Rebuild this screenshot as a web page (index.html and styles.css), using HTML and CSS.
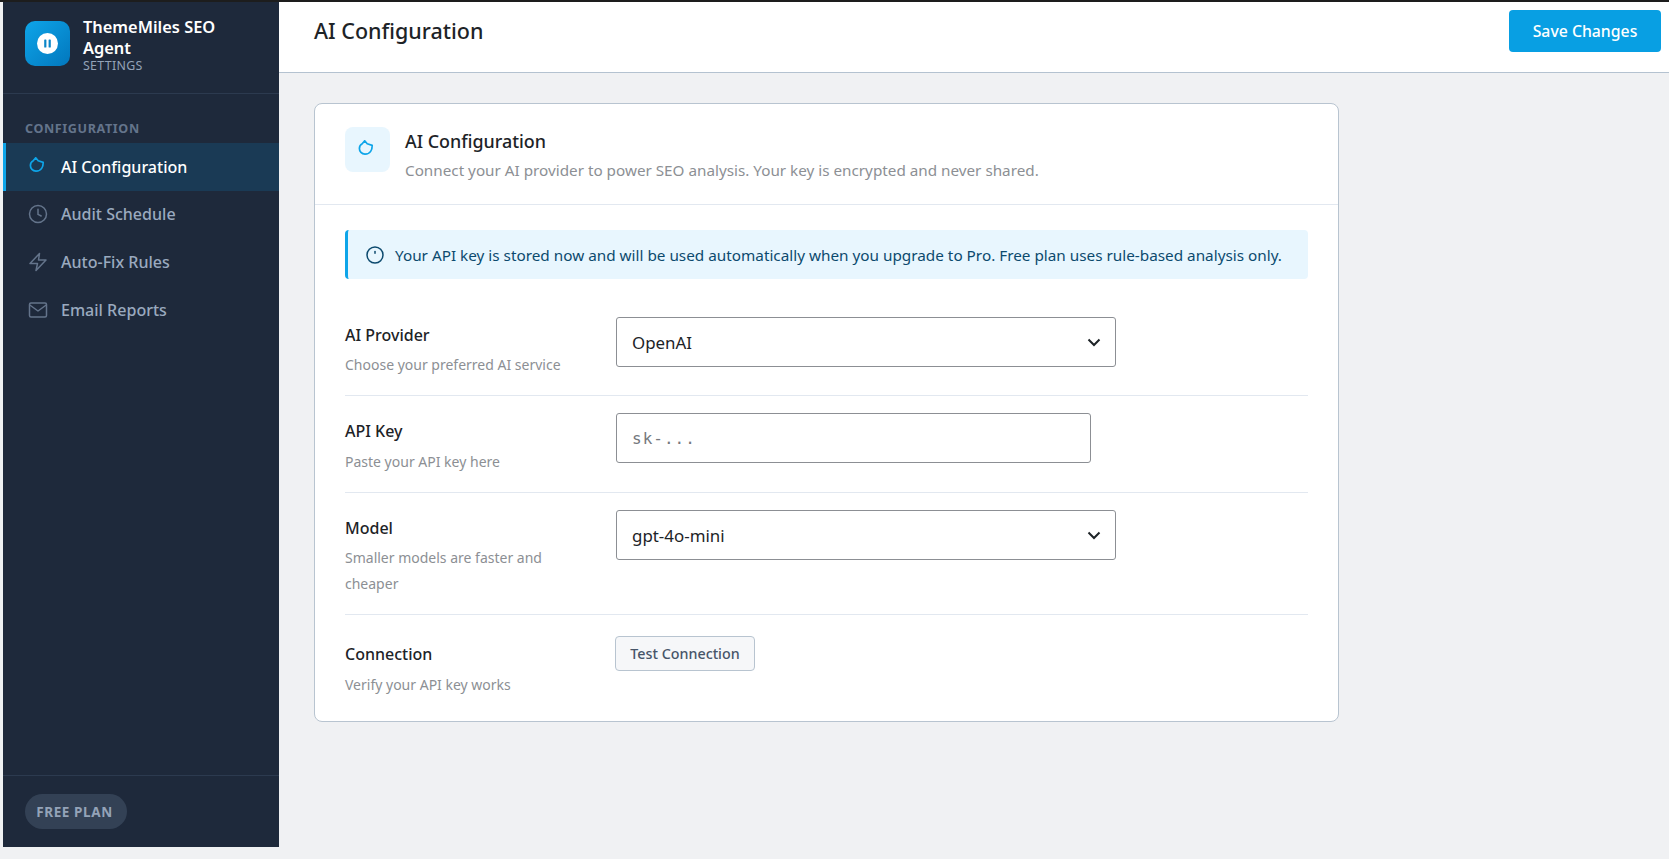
FILE: index.html
```html
<!DOCTYPE html>
<html lang="en">

<head>
  <meta charset="UTF-8" />
  <meta name="viewport" content="width=device-width, initial-scale=1.0" />
  <title>AI Configuration</title>
  <link rel="stylesheet" href="styles.css">
</head>

<body>
  <div class="app">
    <aside class="sidebar">
      <div class="brand">
        <div class="brand-logo">
          <svg width="21" height="21" viewBox="0 0 21 21">
            <circle cx="10.5" cy="10.5" r="10.5" fill="#fff" />
            <rect x="7.2" y="6.5" width="2.2" height="8" rx="0.6" fill="#0a86c8" />
            <rect x="11.6" y="6.5" width="2.2" height="8" rx="0.6" fill="#0a86c8" />
          </svg>
        </div>
        <div class="brand-text">
          <div class="brand-name">ThemeMiles SEO Agent</div>
          <div class="brand-sub">SETTINGS</div>
        </div>
      </div>

      <nav class="nav">
        <div class="nav-title">CONFIGURATION</div>
        <a class="nav-item active">
          <svg class="nav-icon" viewBox="0 0 20 20" fill="none" stroke="currentColor" stroke-width="1.7" stroke-linejoin="round">
            <path d="M7.7 0.8 10.2 3.8 15.2 5.4C15.2 9 13.8 14.2 8 14.2 4.6 14.2 2.4 11.4 2.4 8.4 2.4 6.4 3.4 4.8 5.2 3.8Z" />
          </svg>
          <span>AI Configuration</span>
        </a>
        <a class="nav-item">
          <svg class="nav-icon" viewBox="0 0 20 20" fill="none" stroke="currentColor" stroke-width="1.5" stroke-linecap="round" stroke-linejoin="round">
            <circle cx="10" cy="10" r="8.5" />
            <path d="M10 5.2V10.4L13.2 12" />
          </svg>
          <span>Audit Schedule</span>
        </a>
        <a class="nav-item">
          <svg class="nav-icon" viewBox="0 0 20 20" fill="none" stroke="currentColor" stroke-width="1.5" stroke-linejoin="round">
            <path d="M11.5 1.5 2 11.5H9.5L8 18.5 18 8H10.5Z" />
          </svg>
          <span>Auto-Fix Rules</span>
        </a>
        <a class="nav-item">
          <svg class="nav-icon" viewBox="0 0 20 20" fill="none" stroke="currentColor" stroke-width="1.5" stroke-linejoin="round">
            <rect x="1.5" y="3" width="17" height="14" rx="1.5" />
            <path d="M1.8 5 10 11 18.2 5" />
          </svg>
          <span>Email Reports</span>
        </a>
      </nav>

      <div class="sidebar-foot">
        <span class="plan">FREE PLAN</span>
      </div>
    </aside>

    <main class="main">
      <header class="topbar">
        <h1 class="page-title">AI Configuration</h1>
        <button class="btn-save">Save Changes</button>
      </header>

      <div class="content">
        <section class="card">
          <div class="card-head">
            <div class="card-icon">
              <svg class="card-glyph" width="20" height="20" viewBox="0 0 20 20" fill="none" stroke="#0ea5e9" stroke-width="1.7" stroke-linejoin="round">
                <path d="M7.7 0.8 10.2 3.8 15.2 5.4C15.2 9 13.8 14.2 8 14.2 4.6 14.2 2.4 11.4 2.4 8.4 2.4 6.4 3.4 4.8 5.2 3.8Z" />
              </svg>
            </div>
            <div class="card-text">
              <h2 class="card-title">AI Configuration</h2>
              <p class="card-desc">Connect your AI provider to power SEO analysis. Your key is encrypted and never shared.</p>
            </div>
          </div>

          <div class="card-body">
            <div class="notice">
              <svg width="18" height="18" viewBox="0 0 18 18" fill="none" stroke="#0c4a6e" stroke-width="1.5" stroke-linecap="round">
                <circle cx="9" cy="9" r="8" />
                <path d="M9 5.4V7.2" />
              </svg>
              <span>Your API key is stored now and will be used automatically when you upgrade to Pro. Free plan uses rule-based analysis only.</span>
            </div>

            <div class="row">
              <div class="row-label">
                <label class="label">AI Provider</label>
                <p class="hint">Choose your preferred AI service</p>
              </div>
              <div class="select">
                <span>OpenAI</span>
                <svg width="14" height="14" viewBox="0 0 14 14" fill="none" stroke="#1d2327" stroke-width="2"><path d="M1.5 4.5 7 10 12.5 4.5" /></svg>
              </div>
            </div>

            <div class="row">
              <div class="row-label">
                <label class="label">API Key</label>
                <p class="hint">Paste your API key here</p>
              </div>
              <input class="input" type="text" placeholder="sk-...">
            </div>

            <div class="row">
              <div class="row-label">
                <label class="label">Model</label>
                <p class="hint">Smaller models are faster and cheaper</p>
              </div>
              <div class="select">
                <span>gpt-4o-mini</span>
                <svg width="14" height="14" viewBox="0 0 14 14" fill="none" stroke="#1d2327" stroke-width="2"><path d="M1.5 4.5 7 10 12.5 4.5" /></svg>
              </div>
            </div>

            <div class="row row-last">
              <div class="row-label">
                <label class="label">Connection</label>
                <p class="hint">Verify your API key works</p>
              </div>
              <button class="btn-test">Test Connection</button>
            </div>
          </div>
        </section>
      </div>
    </main>
  </div>
</body>

</html>
```

FILE: styles.css
```css
:root {
  --primary-color: #0ea5e9;
  --sidebar-bg: #1e293b;
  --sidebar-line: #2c3a4f;
  --page-bg: #f0f1f3;
  --line: #e2e8f0;
  --muted: #8c8f94;
}

* {
  box-sizing: border-box;
}

html,
body {
  height: 100%;
}

body {
  margin: 0;
  font-family: 'Noto Sans', sans-serif;
  font-size: 14px;
  color: #1d2327;
  background-color: var(--page-bg);
  overflow: hidden;
}

.app {
  display: flex;
  height: 847px;
  padding-left: 3px;
  border-top: 2px solid #1d1d1d;
}

.sidebar {
  display: flex;
  flex-direction: column;
  width: 276px;
  flex-shrink: 0;
  background-color: var(--sidebar-bg);
}

.brand {
  display: flex;
  gap: 13px;
  height: 92px;
  padding: 19px 22px 0;
  border-bottom: 1px solid var(--sidebar-line);
}

.brand-logo {
  display: flex;
  align-items: center;
  justify-content: center;
  width: 45px;
  height: 45px;
  flex-shrink: 0;
  border-radius: 10px;
  background: linear-gradient(135deg, #0ea5e9, #0277bd);
}

.brand-text {
  margin-top: -5px;
}

.brand-name {
  font-size: 16.4px;
  font-weight: 600;
  line-height: 21px;
  color: #fff;
}

.brand-sub {
  font-size: 12.4px;
  line-height: 15px;
  letter-spacing: 0.3px;
  color: #94a3b8;
}

.nav {
  flex: 1;
  padding-top: 25px;
}

.nav-title {
  padding: 0 22px;
  margin-bottom: 5px;
  font-size: 12.6px;
  font-weight: 700;
  line-height: 19px;
  letter-spacing: 0.6px;
  color: #64748b;
}

.nav-item {
  display: flex;
  align-items: center;
  gap: 13px;
  height: 47.6px;
  padding-left: 22px;
  border-left: 3px solid transparent;
  font-size: 16.05px;
  font-weight: 500;
  color: #9aa9bf;
}

.nav-item.active {
  color: #fff;
  background-color: #1a3a55;
  border-left-color: var(--primary-color);
}

.nav-icon {
  width: 20px;
  height: 20px;
  flex-shrink: 0;
  color: #64748b;
}

.active .nav-icon {
  color: var(--primary-color);
}

.sidebar-foot {
  height: 72px;
  padding: 18px 22px 0;
  border-top: 1px solid var(--sidebar-line);
}

.plan {
  display: inline-block;
  width: 102px;
  height: 35px;
  padding-right: 3px;
  font-size: 13.5px;
  font-weight: 700;
  line-height: 36px;
  letter-spacing: 0.6px;
  text-align: center;
  color: #94a3b8;
  background-color: #334155;
  border-radius: 18px;
}

.main {
  flex: 1;
  min-width: 0;
}

.topbar {
  display: flex;
  align-items: center;
  justify-content: space-between;
  height: 71px;
  padding: 0 8px 13px 35px;
  background-color: #fff;
  border-bottom: 1px solid #b4c2d0;
}

.page-title {
  margin: 0;
  font-size: 21.5px;
  font-weight: 500;
}

.btn-save {
  width: 152px;
  height: 42px;
  font-family: inherit;
  font-size: 15.8px;
  font-weight: 500;
  color: #fff;
  background-color: #089fe3;
  border: 0;
  border-radius: 4px;
}

.content {
  padding: 30px 35px;
}

.card {
  width: 1025px;
  height: 619px;
  background-color: #fff;
  border: 1px solid #b8c4d0;
  border-radius: 8px;
}

.card-head {
  display: flex;
  gap: 15px;
  height: 101px;
  padding: 23px 30px 0;
  border-bottom: 1px solid var(--line);
}

.card-icon {
  display: flex;
  align-items: center;
  justify-content: center;
  width: 45px;
  height: 45px;
  flex-shrink: 0;
  background-color: #e8f6fe;
  border-radius: 8px;
}

.card-glyph {
  margin-right: 2px;
}

.card-text {
  padding-top: 2px;
}

.card-title {
  margin: 0 0 5px;
  font-size: 17.9px;
  font-weight: 500;
  line-height: 24px;
}

.card-desc {
  margin: 0;
  font-size: 15.25px;
  line-height: 24px;
  color: var(--muted);
}

.card-body {
  padding: 25px 30px 0;
}

.notice {
  display: flex;
  align-items: center;
  gap: 11px;
  height: 49px;
  padding-left: 18px;
  margin-bottom: 20.5px;
  font-size: 15.3px;
  color: #0c4a6e;
  background-color: #e8f6fe;
  border-left: 3px solid var(--primary-color);
  border-radius: 4px;
}

.row {
  display: flex;
  align-items: flex-start;
  padding: 17px 0;
  border-bottom: 1px solid var(--line);
}

.row-last {
  padding-top: 21px;
  padding-bottom: 0;
  border-bottom: 0;
}

.row-label {
  width: 220px;
  margin-right: 51px;
  flex-shrink: 0;
}

.label {
  display: block;
  padding-top: 6px;
  margin-bottom: 5.5px;
  font-size: 16px;
  font-weight: 500;
  line-height: 24px;
}

.hint {
  margin: 0;
  font-size: 14px;
  line-height: 26px;
  color: var(--muted);
}

.select {
  display: flex;
  align-items: center;
  justify-content: space-between;
  width: 500px;
  height: 50px;
  padding: 1px 14px 0 15px;
  font-size: 16.9px;
  background-color: #fff;
  border: 1px solid #8c8f94;
  border-radius: 3px;
}

.input {
  width: 475px;
  height: 50px;
  padding: 0 15px;
  font-family: 'DejaVu Sans Mono', monospace;
  font-size: 16px;
  letter-spacing: 1px;
  background-color: #fff;
  border: 1px solid #8c8f94;
  border-radius: 3px;
}

.input::placeholder {
  color: #75787d;
}

.btn-test {
  width: 140px;
  height: 35px;
  margin-left: -1px;
  font-family: inherit;
  font-size: 14.3px;
  font-weight: 500;
  color: #475569;
  background-color: #f6f7f9;
  border: 1px solid #b8c4d0;
  border-radius: 4px;
}
```
